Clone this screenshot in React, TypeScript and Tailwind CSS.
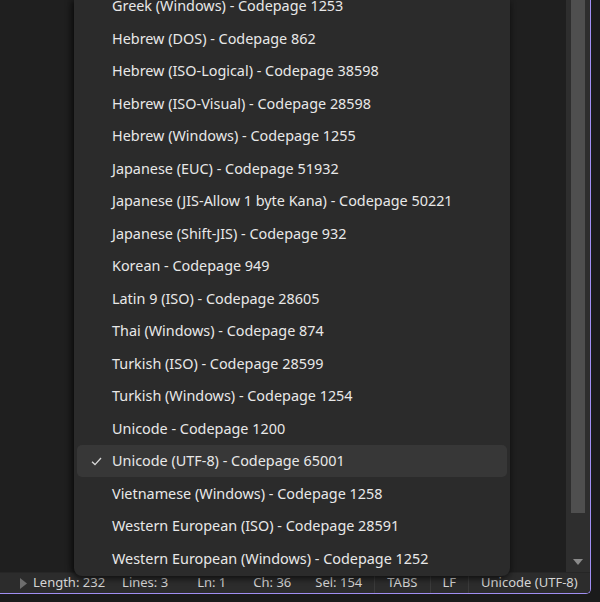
const ENCODINGS = [
  "Greek (Windows) - Codepage 1253",
  "Hebrew (DOS) - Codepage 862",
  "Hebrew (ISO-Logical) - Codepage 38598",
  "Hebrew (ISO-Visual) - Codepage 28598",
  "Hebrew (Windows) - Codepage 1255",
  "Japanese (EUC) - Codepage 51932",
  "Japanese (JIS-Allow 1 byte Kana) - Codepage 50221",
  "Japanese (Shift-JIS) - Codepage 932",
  "Korean - Codepage 949",
  "Latin 9 (ISO) - Codepage 28605",
  "Thai (Windows) - Codepage 874",
  "Turkish (ISO) - Codepage 28599",
  "Turkish (Windows) - Codepage 1254",
  "Unicode - Codepage 1200",
  "Unicode (UTF-8) - Codepage 65001",
  "Vietnamese (Windows) - Codepage 1258",
  "Western European (ISO) - Codepage 28591",
  "Western European (Windows) - Codepage 1252",
];

const SELECTED = "Unicode (UTF-8) - Codepage 65001";

export default function App() {
  return (
    <div
      className="w-[600px] h-[602px] bg-[#1b1b1b] overflow-hidden"
      style={{ fontFamily: '"Noto Sans", "Open Sans", sans-serif' }}
    >
      <div className="relative w-[591px] h-[594px] flex flex-col border-r border-b border-[#a08ef2] rounded-br-[5px] overflow-hidden bg-[#1f1f1f]">
        {/* editor area + scrollbar */}
        <div className="flex-1 flex">
          <div className="flex-1 bg-[#1f1f1f]" />
          <div className="w-[24px] bg-[#2e2e2e] flex flex-col pl-[5px] pr-[5px]">
            <div className="h-[513px] bg-[#4f4f4f]" />
            <div className="flex-1 flex items-end justify-center pb-[7px]">
              <svg width="10" height="6" viewBox="0 0 10 6">
                <path d="M0 0 L10 0 L5 6 Z" fill="#8a8a8a" />
              </svg>
            </div>
          </div>
        </div>

        {/* status bar */}
        <div className="h-[21px] shrink-0 bg-[#2c2c2c] flex items-center text-[13px] text-[#d4d4d4] whitespace-nowrap border-t border-[#262626]">
          <div className="pl-[20px] flex items-center shrink-0">
            <svg width="7" height="11" viewBox="0 0 7 11">
              <path d="M0 0 L7 5.5 L0 11 Z" fill="#6e6e6e" />
            </svg>
          </div>
          <span className="ml-[6px] shrink-0">Length: 232</span>
          <span className="ml-[17px] shrink-0">Lines: 3</span>
          <span className="ml-[29px] shrink-0">Ln: 1</span>
          <span className="ml-[27px] shrink-0">Ch: 36</span>
          <span className="ml-[24px] shrink-0">Sel: 154</span>
          <div className="ml-[12px] h-full border-l border-[#3a3a3a] px-[12px] flex items-center shrink-0">TABS</div>
          <div className="h-full border-l border-[#3a3a3a] px-[12px] flex items-center shrink-0">LF</div>
          <div className="h-full border-l border-[#3a3a3a] pl-[12px] flex items-center shrink-0">Unicode (UTF-8)</div>
        </div>

        {/* encoding dropdown */}
        <div className="absolute left-[74px] top-0 w-[436px] h-[576px] bg-[#2b2b2b] rounded-b-[8px] overflow-hidden shadow-[-3px_0_6px_rgba(0,0,0,0.45),0_3px_6px_rgba(0,0,0,0.45)]">
          <div className="-mt-[10.25px] px-[3px]">
            {ENCODINGS.map((e) => {
              const sel = e === SELECTED;
              return (
                <div
                  key={e}
                  className={
                    "h-[32.5px] flex items-center rounded-[5px] text-[14.4px] text-[#e8e8e8] whitespace-nowrap " +
                    (sel ? "bg-[#373737]" : "")
                  }
                >
                  <div className="w-[35px] flex justify-center pl-[4px]">
                    {sel && (
                      <svg width="11" height="9" viewBox="0 0 11 9">
                        <path d="M1 4.8 L4 7.6 L10 1" fill="none" stroke="#d8d8d8" strokeWidth="1.3" />
                      </svg>
                    )}
                  </div>
                  <span>{e}</span>
                </div>
              );
            })}
          </div>
        </div>
      </div>
    </div>
  );
}
